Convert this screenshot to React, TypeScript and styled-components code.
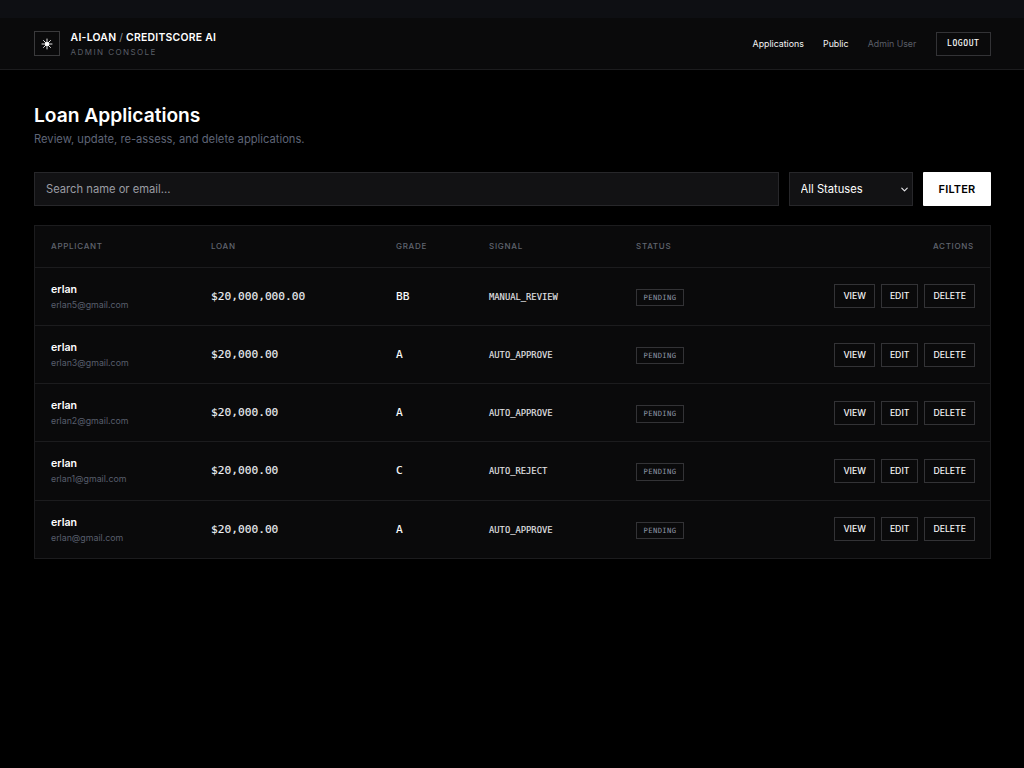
import React from 'react'
import styled, { createGlobalStyle } from 'styled-components'
import { ChevronDown } from 'lucide-react'

const mono = '"DejaVu Sans Mono", "Liberation Mono", monospace'

const GlobalStyle = createGlobalStyle`
  html, body {
    margin: 0;
    padding: 0;
    background: #000;
    color: #fff;
    font-family: Inter, "Noto Sans", sans-serif;
  }
  * { box-sizing: border-box; }
`

const TopStrip = styled.div`
  height: 18px;
  background: #0e0f13;
`

const Header = styled.header`
  height: 52px;
  padding: 0 33px 0 34px;
  display: flex;
  align-items: center;
  justify-content: space-between;
  background: #0a0a0b;
  border-bottom: 1px solid #1c1c1e;
`

const Brand = styled.div`
  display: flex;
  align-items: center;
  gap: 11px;
`

const LogoBox = styled.div`
  width: 25.6px;
  height: 25.6px;
  display: flex;
  align-items: center;
  justify-content: center;
  border: 1px solid #3a3a3c;
  background: #0a0a0b;
`

const BrandText = styled.div`
  display: flex;
  flex-direction: column;
  gap: 2px;
`

const BrandTitle = styled.div`
  font-size: 10.4px;
  line-height: 14px;
  font-weight: 600;
  letter-spacing: 0.26px;
  color: #fff;

  span {
    color: #8a8f98;
    font-weight: 400;
  }
`

const BrandSub = styled.div`
  font-size: 8px;
  line-height: 10px;
  letter-spacing: 1.44px;
  color: #5b5f68;
`

const Nav = styled.nav`
  display: flex;
  align-items: center;
  gap: 19.2px;
`

const NavLink = styled.a`
  font-size: 8.8px;
  font-weight: 400;
  color: #f4f4f5;
`

const NavUser = styled.span`
  font-size: 8.8px;
  color: #5b5f68;
`

const LogoutButton = styled.button`
  width: 55.5px;
  height: 24px;
  padding: 0;
  background: #0a0a0b;
  border: 1px solid #333336;
  color: #fff;
  font-family: ${mono};
  font-size: 8px;
  letter-spacing: 0.6px;
  -webkit-text-stroke: 0.1px;
`

const Main = styled.main`
  padding: 32px 33px 0 34px;
`

const Title = styled.h1`
  margin: 0;
  font-size: 19.2px;
  line-height: 26px;
  font-weight: 600;
  color: #fff;
`

const Subtitle = styled.p`
  margin: 2px 0 0;
  font-size: 11.2px;
  line-height: 18px;
  color: #5f6577;
`

const FilterBar = styled.form`
  margin-top: 24px;
  display: flex;
  gap: 9.6px;
`

const SearchInput = styled.input`
  flex: 1;
  height: 33.6px;
  padding: 0 11px;
  background: #121214;
  border: 1px solid #27272a;
  color: #fff;
  font-family: Inter, sans-serif;
  font-size: 11.2px;

  &::placeholder {
    color: #9a9ca3;
    opacity: 1;
  }
`

const SelectWrap = styled.div`
  position: relative;
  width: 124.8px;
  height: 33.6px;

  svg {
    position: absolute;
    right: 3px;
    top: 11.5px;
    pointer-events: none;
    color: #e4e4e7;
  }
`

const StatusSelect = styled.select`
  appearance: none;
  width: 100%;
  height: 100%;
  padding: 0 11px;
  background: #121214;
  border: 1px solid #27272a;
  border-radius: 0;
  color: #fff;
  font-family: Inter, sans-serif;
  font-size: 11.2px;
`

const FilterButton = styled.button`
  width: 68px;
  height: 33.6px;
  padding: 0;
  background: #fff;
  border: none;
  border-radius: 1px;
  color: #000;
  font-family: Inter, sans-serif;
  font-size: 11px;
  font-weight: 600;
  letter-spacing: 0.2px;
`

const TableCard = styled.div`
  margin-top: 19.2px;
  background: #0a0a0b;
  border: 1px solid #1c1c1e;
`

const Table = styled.table`
  width: 100%;
  border-collapse: collapse;
  table-layout: fixed;
`

const HeadCell = styled.th<{ $width?: number; $right?: boolean }>`
  width: ${(p) => (p.$width ? `${p.$width}px` : 'auto')};
  height: 41.5px;
  padding: 0 16px;
  text-align: ${(p) => (p.$right ? 'right' : 'left')};
  font-size: 8px;
  font-weight: 500;
  letter-spacing: 0.72px;
  color: #60656f;
  border-bottom: 1px solid #1c1c1e;
`

const Row = styled.tr`
  height: 58.2px;

  &:not(:last-child) td {
    border-bottom: 1px solid #1c1c1e;
  }
`

const Cell = styled.td<{ $actions?: boolean }>`
  padding: 1px ${(p) => (p.$actions ? '15px' : '16px')} 0 16px;
  line-height: 14px;
`

const Name = styled.div`
  font-size: 10.6px;
  line-height: 14px;
  font-weight: 600;
  color: #fff;
`

const Email = styled.div`
  margin-top: 2px;
  font-size: 8.8px;
  line-height: 12px;
  color: #585e6c;
`

const Amount = styled.div`
  font-family: ${mono};
  font-size: 11.2px;
  line-height: 14px;
  color: #eef1f5;
  -webkit-text-stroke: 0.1px;
`

const Grade = styled.div`
  font-family: ${mono};
  font-size: 11.2px;
  line-height: 14px;
  color: #fff;
  -webkit-text-stroke: 0.1px;
`

const Signal = styled.div`
  font-family: ${mono};
  font-size: 8.8px;
  line-height: 12px;
  color: #e4e4e7;
  -webkit-text-stroke: 0.1px;
`

const Badge = styled.div`
  width: 48px;
  height: 17.6px;
  margin-top: 1px;
  text-align: center;
  line-height: 15.6px;
  border: 1px solid #333336;
  font-family: ${mono};
  font-size: 7.2px;
  letter-spacing: 0.4px;
  color: #8e96a6;
`

const Actions = styled.div`
  display: flex;
  justify-content: flex-end;
  gap: 6px;
  margin-top: -1px;
`

const ActionButton = styled.button`
  height: 24px;
  padding: 0 8px;
  background: #0a0a0b;
  border: 1px solid #333336;
  color: #f4f4f5;
  font-family: Inter, sans-serif;
  font-size: 8.7px;
  font-weight: 500;
`

const rows = [
  { email: 'erlan5@gmail.com', amount: '$20,000,000.00', grade: 'BB', signal: 'MANUAL_REVIEW' },
  { email: 'erlan3@gmail.com', amount: '$20,000.00', grade: 'A', signal: 'AUTO_APPROVE' },
  { email: 'erlan2@gmail.com', amount: '$20,000.00', grade: 'A', signal: 'AUTO_APPROVE' },
  { email: 'erlan1@gmail.com', amount: '$20,000.00', grade: 'C', signal: 'AUTO_REJECT' },
  { email: 'erlan@gmail.com', amount: '$20,000.00', grade: 'A', signal: 'AUTO_APPROVE' },
]

function SparkIcon() {
  return (
    <svg width="12" height="12" viewBox="0 0 12 12" fill="#fff" stroke="#fff" strokeWidth="0.9" strokeLinecap="round">
      <circle cx="6" cy="6" r="1.6" />
      <path d="M6 1v10M1 6h10M2.5 2.5l7 7M9.5 2.5l-7 7" />
    </svg>
  )
}

export default function App() {
  return (
    <>
      <GlobalStyle />
      <TopStrip />
      <Header>
        <Brand>
          <LogoBox>
            <SparkIcon />
          </LogoBox>
          <BrandText>
            <BrandTitle>
              AI-LOAN <span>/</span> CREDITSCORE AI
            </BrandTitle>
            <BrandSub>ADMIN CONSOLE</BrandSub>
          </BrandText>
        </Brand>
        <Nav>
          <NavLink>Applications</NavLink>
          <NavLink>Public</NavLink>
          <NavUser>Admin User</NavUser>
          <LogoutButton>LOGOUT</LogoutButton>
        </Nav>
      </Header>
      <Main>
        <Title>Loan Applications</Title>
        <Subtitle>Review, update, re-assess, and delete applications.</Subtitle>
        <FilterBar>
          <SearchInput placeholder="Search name or email..." />
          <SelectWrap>
            <StatusSelect defaultValue="all">
              <option value="all">All Statuses</option>
            </StatusSelect>
            <ChevronDown size={11} strokeWidth={2.5} />
          </SelectWrap>
          <FilterButton type="button">FILTER</FilterButton>
        </FilterBar>
        <TableCard>
          <Table>
            <thead>
              <tr>
                <HeadCell $width={160}>APPLICANT</HeadCell>
                <HeadCell $width={185}>LOAN</HeadCell>
                <HeadCell $width={93}>GRADE</HeadCell>
                <HeadCell $width={147}>SIGNAL</HeadCell>
                <HeadCell $width={120}>STATUS</HeadCell>
                <HeadCell $right>ACTIONS</HeadCell>
              </tr>
            </thead>
            <tbody>
              {rows.map((row) => (
                <Row key={row.email}>
                  <Cell>
                    <Name>erlan</Name>
                    <Email>{row.email}</Email>
                  </Cell>
                  <Cell>
                    <Amount>{row.amount}</Amount>
                  </Cell>
                  <Cell>
                    <Grade>{row.grade}</Grade>
                  </Cell>
                  <Cell>
                    <Signal>{row.signal}</Signal>
                  </Cell>
                  <Cell>
                    <Badge>PENDING</Badge>
                  </Cell>
                  <Cell $actions>
                    <Actions>
                      <ActionButton>VIEW</ActionButton>
                      <ActionButton>EDIT</ActionButton>
                      <ActionButton>DELETE</ActionButton>
                    </Actions>
                  </Cell>
                </Row>
              ))}
            </tbody>
          </Table>
        </TableCard>
      </Main>
    </>
  )
}
